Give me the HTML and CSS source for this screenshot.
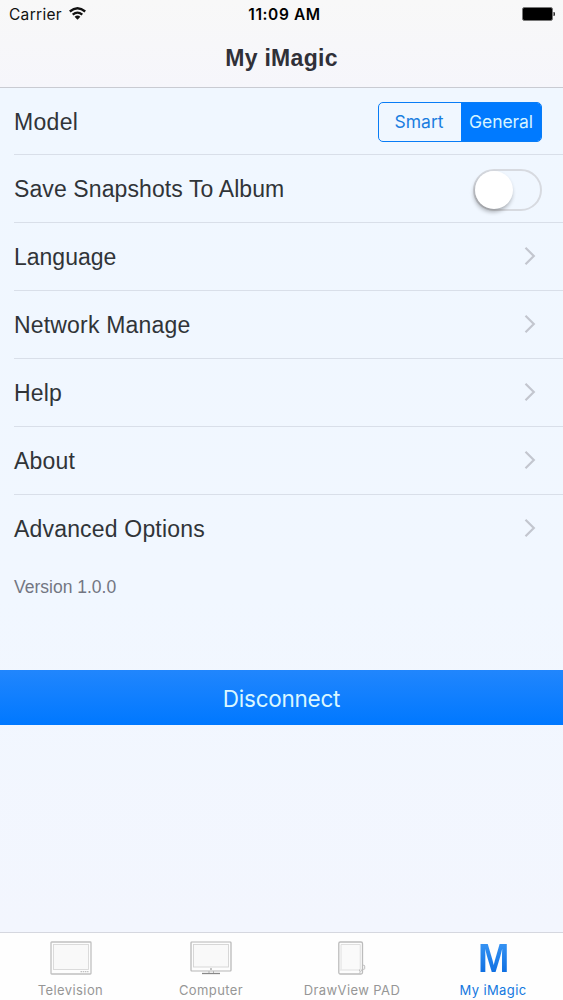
FILE: index.html
```html
<!DOCTYPE html>
<html lang="en">
<head>
<meta charset="utf-8">
<title>My iMagic</title>
<link rel="stylesheet" href="styles.css">
</head>
<body>
<div class="screen">
  <header class="header">
    <div class="status">
      <div class="carrier"><span>Carrier</span>
        <svg class="wifi" width="17" height="13" viewBox="0 0 17 13" fill="none" stroke="#111" stroke-width="2.3"><path d="M.8 4.5Q8.500-2 16.200 4.500"/><path d="M3.700 7.600Q8.500 3.700 13.300 7.600"/><path d="M8.500 12.700L5.600 9.700Q8.500 7.500 11.400 9.700Z" fill="#111" stroke="none"/></svg>
      </div>
      <div class="time">11:09 AM</div>
      <svg class="battery" width="34" height="14" viewBox="0 0 34 14"><rect x="1.500" y=".5" width="30" height="13" rx="1.800" fill="#000" stroke="#777"/><path d="M32.500 5h.6q.9 0 .9 2t-.9 2h-.6z" fill="#222"/></svg>
    </div>
    <h1 class="title">My iMagic</h1>
  </header>
  <main class="content">
    <ul class="list">
      <li class="row first"><span class="label model">Model</span>
        <div class="segmented"><span class="segment smart">Smart</span><span class="segment selected">General</span></div></li>
      <li class="row"><span class="label save">Save Snapshots To Album</span><span class="switch"><span class="knob"></span></span></li>
      <li class="row"><span class="label language">Language</span><svg class="chevron" width="12" height="20" viewBox="0 0 12 20"><path d="M1.500 1.800L9.800 10L1.500 18.200"/></svg></li>
      <li class="row"><span class="label">Network Manage</span><svg class="chevron" width="12" height="20" viewBox="0 0 12 20"><path d="M1.500 1.800L9.800 10L1.500 18.200"/></svg></li>
      <li class="row"><span class="label">Help</span><svg class="chevron" width="12" height="20" viewBox="0 0 12 20"><path d="M1.500 1.800L9.800 10L1.500 18.200"/></svg></li>
      <li class="row"><span class="label">About</span><svg class="chevron" width="12" height="20" viewBox="0 0 12 20"><path d="M1.500 1.800L9.800 10L1.500 18.200"/></svg></li>
      <li class="row last"><span class="label">Advanced Options</span><svg class="chevron" width="12" height="20" viewBox="0 0 12 20"><path d="M1.500 1.800L9.800 10L1.500 18.200"/></svg></li>
    </ul>
    <p class="version">Version 1.0.0</p>
    <button class="disconnect">Disconnect</button>
  </main>
  <nav class="tabs">
    <div class="tab">
      <svg width="44" height="36" viewBox="0 0 44 36" fill="none" stroke="#c0c0c0"><rect x="2" y="2" width="40" height="32" rx=".7" fill="#fdfdfd" stroke-width="1.300"/><rect x="4.500" y="4.500" width="35" height="25" fill="#f9f9f9" stroke="#d8d8d8" stroke-width=".9"/><path d="M31.500 31.600h8" stroke-dasharray="1.500 .7" stroke-width="1.300"/></svg>
      <span class="name">Television</span>
    </div>
    <div class="tab">
      <svg width="44" height="36" viewBox="0 0 44 36" fill="none" stroke="#b5b5b5"><rect x="1" y="2" width="40" height="29" rx=".7" fill="#fdfdfd" stroke-width="1.200"/><rect x="3.500" y="4.500" width="35" height="22.500" fill="#f9f9f9" stroke="#d3d3d3" stroke-width=".9"/><circle cx="21" cy="29" r=".6" fill="#999"/><path d="M19 31v2M23.500 31v2"/><path d="M12 33.500h18" stroke="#888" stroke-width="1.300"/></svg>
      <span class="name computer">Computer</span>
    </div>
    <div class="tab">
      <svg width="44" height="36" viewBox="0 0 44 36" fill="none" stroke="#bcbcbc"><rect x="7.800" y="2" width="23.700" height="32" rx="1.500" fill="#fdfdfd" stroke-width="1.300"/><path d="M10 29.500V4.500h19.300v25M8.500 30h22" stroke="#d8d8d8" fill="#fafafa" stroke-width=".8"/><path d="M28.200 33.500l3.300-4.500M28.500 29.500v2" stroke-width=".9"/><rect x="31.500" y="25.300" width="2.200" height="4" rx=".8"/></svg>
      <span class="name pad">DrawView PAD</span>
    </div>
    <div class="tab active">
      <span class="logo">M</span>
      <span class="name me">My iMagic</span>
    </div>
  </nav>
</div>
</body>
</html>
```
FILE: styles.css
```css
* { box-sizing: border-box; }
body { margin: 0; font-family: "Liberation Sans", Arial, sans-serif; }
.screen { width: 563px; height: 1000px; display: flex; flex-direction: column; background: #f1f6fe; overflow: hidden; }
.header { height: 88px; flex: none; background: linear-gradient(#f8f8f8, #f6f6fb); border-bottom: 1px solid #c9cbd2; }
.status { height: 29px; display: grid; grid-template-columns: 1fr auto 1fr; align-items: center; padding: 0 8px 0 9px; font: 15.500px/20px Inter, sans-serif; color: #111; }
.carrier { display: flex; align-items: center; gap: 7px; letter-spacing: .3px; }
.wifi { margin-bottom: 2px; }
.time { font-weight: 600; letter-spacing: .6px; color: #000; margin-left: 5px; }
.battery { justify-self: end; margin-bottom: 1px; }
.title { margin: 14px 0 0; text-align: center; font-size: 23px; line-height: 30px; letter-spacing: .3px; color: #303038; }
.content { flex: 1; background: linear-gradient(#f0f7ff, #f1f7ff 60%, #f3f6fe); }
.list { list-style: none; margin: 0; padding: 0 0 0 14px; }
.row { height: 68px; display: flex; align-items: center; justify-content: space-between; border-bottom: 1px solid #d9dfe9; padding-right: 21px; }
.first { height: 67px; }
.last { border-bottom-color: transparent; }
.label { font-size: 23px; line-height: 30px; letter-spacing: .18px; color: #303438; white-space: nowrap; }
.model { letter-spacing: .3px; padding-top: 1px; }
.save { letter-spacing: .1px; padding-top: 1px; }
.language { letter-spacing: 0; }
.segmented { display: flex; width: 164px; height: 40px; margin-top: 1px; border: 1.500px solid #087cf6; border-radius: 5px; overflow: hidden; }
.segment { flex: 1; display: flex; align-items: center; justify-content: center; font: 17.500px/22px Inter, sans-serif; color: #1a7de0; }
.smart { padding-right: 2px; }
.selected { background: #007aff; color: #d7f4ff; letter-spacing: -.1px; }
.switch { width: 69px; height: 42px; margin-top: 2px; border: 2px solid #d7dae0; border-radius: 21px; }
.knob { display: block; width: 38px; height: 38px; border-radius: 50%; background: #fff; box-shadow: -1px 3px 4px rgba(0,0,0,.3); }
.chevron { margin: 0 6px 1px 0; fill: none; stroke: #c3c6cf; stroke-width: 2.200; }
.version { margin: 11px 0 0 14px; font-size: 17.500px; line-height: 26px; color: #737682; }
.disconnect { display: block; width: 100%; height: 55px; margin: 70px 0 0; padding: 2px 0 0 0; border: 0; background: linear-gradient(#2186fd, #0078ff); color: #daf7ff; font: 22.500px/30px Inter, sans-serif; letter-spacing: -.25px; }
.tabs { flex: none; height: 68px; display: grid; grid-template-columns: repeat(4, 141px); background: #fefefe; border-top: 1px solid #d5d7df; }
.tab { display: flex; flex-direction: column; align-items: center; padding-top: 7px; color: #969696; }
.name { font: 13px/18px Inter, sans-serif; letter-spacing: .4px; margin-top: 5px; white-space: nowrap; }
.computer { margin-right: 1px; }
.pad { margin-right: 1px; }
.me { margin-right: 1px; }
.active { color: #1478df; }
.logo { height: 36px; font-size: 40px; line-height: 37px; font-weight: bold; background: linear-gradient(#3a97f5, #0a6be0); background-clip: text; color: transparent; transform: scaleX(.94); }
```
